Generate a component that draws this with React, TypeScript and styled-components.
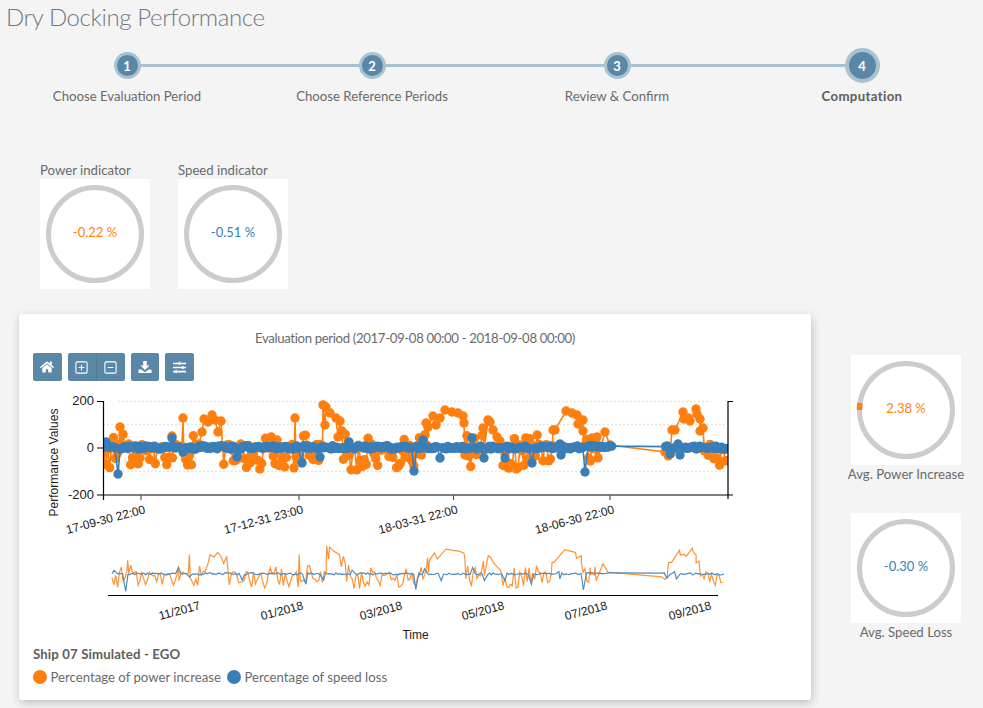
import React from "react";
import styled, { createGlobalStyle } from "styled-components";
import { FaHome, FaSlidersH } from "react-icons/fa";
import { SquarePlus, SquareMinus } from "lucide-react";

const ORANGE = "#ff7f0e";
const BLUE = "#3a7eb8";
const UI_FONT = `"Lato", "Noto Sans", sans-serif`;

const Global = createGlobalStyle`
  html, body { margin: 0; padding: 0; background: #f4f4f4; }
  body { font-family: ${UI_FONT}; color: #666; overflow: hidden; }
`;

const Page = styled.div`
  width: 983px;
  height: 708px;
  overflow: hidden;
  background: #f4f4f4;
`;

const Title = styled.h1`
  margin: 0;
  padding: 0 0 0 6px;
  height: 48px;
  font-size: 24px;
  line-height: 33px;
  font-weight: 300;
  letter-spacing: -0.38px;
  color: #6f7886;
`;

const Stepper = styled.div`
  display: grid;
  grid-template-columns: repeat(4, 245px);
  padding-left: 4.5px;
`;

const Step = styled.div`
  position: relative;
  display: flex;
  flex-direction: column;
  align-items: center;
`;

const Connector = styled.div`
  position: absolute;
  left: 50%;
  top: 16px;
  width: 100%;
  height: 3px;
  background: #a9c2d1;
`;

const DotSlot = styled.div`
  height: 35px;
  display: flex;
  align-items: center;
  justify-content: center;
  position: relative;
  z-index: 1;
`;

const Dot = styled.div<{ $active?: boolean }>`
  box-sizing: border-box;
  width: ${(p) => (p.$active ? 35 : 27)}px;
  height: ${(p) => (p.$active ? 35 : 27)}px;
  border-radius: 50%;
  border: ${(p) => (p.$active ? 4 : 3.5)}px solid #a9c2d1;
  background: #5b87a6;
  color: #fff;
  font-size: 13px;
  font-weight: 700;
  display: flex;
  align-items: center;
  justify-content: center;
`;

const StepLabel = styled.div<{ $active?: boolean }>`
  margin-top: 4px;
  font-size: 13.2px;
  line-height: 18px;
  white-space: nowrap;
  letter-spacing: ${(p) => (p.$active ? "0.35px" : "0")};
  font-weight: ${(p) => (p.$active ? 700 : 400)};
  color: ${(p) => (p.$active ? "#5d5d5d" : "#6a6a6a")};
`;

const Indicators = styled.div`
  display: flex;
  gap: 28px;
  margin: 56px 0 0 40px;
`;

const Indicator = styled.div`
  width: 110px;
`;

const IndicatorLabel = styled.div`
  font-size: 13.2px;
  line-height: 18px;
  color: #6a6a6a;
  white-space: nowrap;
`;

const GaugeSvg = styled.svg`
  display: block;
  width: 110px;
  height: 110px;
  background: #fff;
`;

const GaugeValue = styled.text<{ $color: string }>`
  font-family: ${UI_FONT};
  font-size: 13px;
  fill: ${(p) => p.$color};
  text-anchor: middle;
`;

const Main = styled.div`
  display: flex;
  align-items: flex-start;
  margin: 25px 0 0 19px;
`;

const Card = styled.div`
  box-sizing: border-box;
  width: 792px;
  height: 386px;
  flex: none;
  background: #fff;
  border-radius: 3px;
  box-shadow: 1px 3px 10px rgba(0, 0, 0, 0.22);
  padding-top: 15px;
`;

const CardTitle = styled.div`
  text-align: center;
  font-size: 13.2px;
  line-height: 18px;
  letter-spacing: -0.35px;
  color: #6a6a6a;
`;

const Toolbar = styled.div`
  display: flex;
  gap: 6px;
  margin: 6px 0 0 14px;
`;

const ToolGroup = styled.div`
  display: flex;
`;

const ToolButton = styled.button<{ $joinLeft?: boolean; $joinRight?: boolean }>`
  box-sizing: border-box;
  width: 28.5px;
  height: 28px;
  padding: 0;
  border: none;
  color: #fff;
  background: #5b87a6;
  border-radius: ${(p) =>
    p.$joinLeft ? "0 2px 2px 0" : p.$joinRight ? "2px 0 0 2px" : "2px"};
  border-left: ${(p) => (p.$joinLeft ? "1px solid #517c99" : "none")};
  display: flex;
  align-items: center;
  justify-content: center;
`;

const ChartSvg = styled.svg`
  display: block;
  margin-top: 4px;
  width: 792px;
  height: 258px;
`;

const AxisText = styled.text`
  font-family: "Liberation Sans", Arial, sans-serif;
  font-size: 12px;
  fill: #1a1a1a;
`;

const YTick = styled(AxisText)`
  font-size: 13px;
`;

const ShipName = styled.div`
  margin: 2px 0 0 14px;
  font-size: 13.2px;
  line-height: 18px;
  font-weight: 700;
  letter-spacing: 0.13px;
  color: #5d5d5d;
`;

const Legend = styled.div`
  display: flex;
  align-items: center;
  margin: 5px 0 0 14px;
  height: 18px;
`;

const LegendDot = styled.span<{ $color: string }>`
  width: 14px;
  height: 14px;
  border-radius: 50%;
  background: ${(p) => p.$color};
  margin-right: 3.5px;
  flex: none;
`;

const LegendLabel = styled.span`
  font-size: 13.2px;
  line-height: 18px;
  color: #6a6a6a;
  white-space: nowrap;
  margin-right: 6px;
`;

const Side = styled.div`
  margin: 41px 0 0 40px;
  width: 110px;
  display: flex;
  flex-direction: column;
  gap: 30px;
`;

const SideItem = styled.div`
  display: flex;
  flex-direction: column;
  align-items: center;
`;

/* ---------- data ---------- */

function rng(seed: number) {
  return () => {
    seed |= 0;
    seed = (seed + 0x6d2b79f5) | 0;
    let t = Math.imul(seed ^ (seed >>> 15), 1 | seed);
    t = (t + Math.imul(t ^ (t >>> 7), 61 | t)) ^ t;
    return ((t ^ (t >>> 14)) >>> 0) / 4294967296;
  };
}

type P = [number, number];

const orangeKeys: P[] = [
  [120, 427], [183, 418], [172, 436], [202, 432], [204, 419], [208, 422], [212, 415], [215, 420], [218, 432], [221, 421],
  [295, 418], [323, 405], [326, 407], [330, 413], [336, 418], [340, 421], [342, 431], [325, 425], [338, 437],
  [426, 423], [428, 427], [433, 416], [436, 425], [440, 418], [445, 410], [452, 412], [458, 413], [463, 416], [464, 423],
  [483, 428], [488, 420], [490, 422], [493, 430], [497, 437], [500, 441],
  [553, 430], [555, 430], [566, 411], [572, 413], [577, 415], [578, 424], [583, 420], [583, 431],
  [592, 438], [597, 437], [605, 432], [610, 445], [665, 452],
  [672, 430], [675, 430], [683, 412], [684, 419], [688, 418], [690, 421], [696, 409], [697, 414], [700, 419], [700, 431], [703, 428],
];

const blueKeys: P[] = [
  [106, 442], [118, 474], [172, 438], [183, 452], [237, 457], [302, 463], [320, 457], [349, 442],
  [414, 471], [423, 440], [440, 458], [472, 438], [484, 458], [505, 458], [532, 463], [560, 444],
  [561, 455], [585, 472], [597, 447], [670, 454], [678, 444], [680, 455],
];

const orangeSkip: P[] = [
  [200, 222], [323, 343], [428, 464], [484, 500], [553, 584], [598, 668], [672, 703],
];

function buildOrange(): P[] {
  const r = rng(77);
  const pts: P[] = [];
  for (let x = 104; x < 729; x += 1.9) {
    if (orangeSkip.some(([a, b]) => x > a && x < b)) continue;
    const k = r();
    let y: number;
    if (k < 0.42) y = 444 + r() * 7;
    else if (k < 0.64) y = 453 + r() * 8;
    else if (k < 0.9) y = 459 + r() * 11;
    else y = 434 + r() * 6;
    pts.push([x, y]);
  }
  return [...pts, ...orangeKeys].sort((a, b) => a[0] - b[0]);
}

function buildBlue(): P[] {
  const r = rng(21);
  const pts: P[] = [];
  for (let x = 104; x < 729; x += 1.8) {
    if (x > 612 && x < 664) continue;
    if (blueKeys.some(([a]) => Math.abs(a - x) < 1.8)) continue;
    pts.push([x, 447.5 + (r() - 0.5) * 3.5]);
  }
  return [...pts, ...blueKeys].sort((a, b) => a[0] - b[0]);
}

const orange = buildOrange();
const blue = buildBlue();

const line = (pts: P[]) => pts.map(([x, y]) => `${x.toFixed(1)},${y.toFixed(1)}`).join(" ");
const toOverview = (pts: P[]): P[] =>
  pts.map(([x, y]) => [112 + (x - 104) * 0.98, 573.5 - (447 - y) * 0.66]);

const mainTicks = [
  { x: 141, label: "17-09-30 22:00" },
  { x: 299, label: "17-12-31 23:00" },
  { x: 453.5, label: "18-03-31 22:00" },
  { x: 610, label: "18-06-30 22:00" },
];

const overviewTicks = [
  { x: 201, label: "11/2017" },
  { x: 304, label: "01/2018" },
  { x: 403, label: "03/2018" },
  { x: 505, label: "05/2018" },
  { x: 608, label: "07/2018" },
  { x: 712, label: "09/2018" },
];

const steps = ["Choose Evaluation Period", "Choose Reference Periods", "Review & Confirm", "Computation"];

/* ---------- parts ---------- */

const Gauge = ({ value, color, mark }: { value: string; color: string; mark?: boolean }) => (
  <GaugeSvg viewBox="0 0 110 110">
    <circle cx="55" cy="55" r="46.5" fill="none" stroke="#cccccc" strokeWidth="5" />
    {mark && <path d="M8.5 55 A46.5 46.5 0 0 1 9 48" fill="none" stroke={ORANGE} strokeWidth="5.5" />}
    <GaugeValue x="55" y="58" $color={color}>{value}</GaugeValue>
  </GaugeSvg>
);

const SaveIcon = () => (
  <svg width="14" height="14" viewBox="0 0 14 14" fill="#fff">
    <path d="M5.2 1h3.6v4.5h2.7L7 10 2.500 5.500h2.700z" />
    <path d="M.5 9.500h2.800L7 12.200l3.700-2.700h2.800V13H.5z" />
  </svg>
);

const Chart = () => (
  <ChartSvg viewBox="19 385 792 258">
    <defs>
      <clipPath id="plot"><rect x="103" y="395" width="625" height="100" /></clipPath>
    </defs>
    <g stroke="#e4e4e4" strokeWidth="1.5" strokeDasharray="2 2">
      <line x1="118" x2="711" y1="401.5" y2="401.5" />
      <line x1="103" x2="727" y1="424.5" y2="424.5" />
      <line x1="103" x2="727" y1="471.5" y2="471.5" />
    </g>
    <g clipPath="url(#plot)">
      <polyline points={line(orange)} fill="none" stroke={ORANGE} strokeWidth="1.6" />
      {orange.map(([x, y], i) => <circle key={i} cx={x} cy={y} r="4.7" fill={ORANGE} />)}
      <polyline points={line(blue)} fill="none" stroke={BLUE} strokeWidth="1.6" />
      {blue.map(([x, y], i) => <circle key={i} cx={x} cy={y} r="4.7" fill={BLUE} />)}
    </g>
    <g stroke="#000" strokeWidth="1.2" fill="none">
      <path d="M97 401.500H103.500V495M97 448H103.500M97 495H733" />
      <path d="M733 401.500H728V499" />
      <path d="M103.500 495V500" />
    </g>
    {mainTicks.map((t) => (
      <line key={t.x} x1={t.x} x2={t.x} y1="495" y2="500" stroke="#555" strokeWidth="1.2" />
    ))}
    <YTick x="94" y="405" textAnchor="end">200</YTick>
    <YTick x="94" y="452" textAnchor="end">0</YTick>
    <YTick x="94" y="499" textAnchor="end">-200</YTick>
    <AxisText transform="translate(58 462.5) rotate(-90)" textAnchor="middle">Performance Values</AxisText>
    {mainTicks.map((t) => (
      <AxisText key={t.x} transform={`translate(${t.x + 5} 513) rotate(-15)`} textAnchor="end">{t.label}</AxisText>
    ))}
    <polyline points={line(toOverview(orange))} fill="none" stroke="#ff9233" strokeWidth="1.2" />
    <polyline points={line(toOverview(blue))} fill="none" stroke="#4f8cc0" strokeWidth="1.2" />
    <line x1="108" x2="718" y1="595.5" y2="595.5" stroke="#000" strokeWidth="1.2" />
    {overviewTicks.map((t) => (
      <AxisText key={t.x} transform={`translate(${t.x} 609) rotate(-15)`} textAnchor="end">{t.label}</AxisText>
    ))}
    <AxisText x="415.5" y="639" textAnchor="middle">Time</AxisText>
  </ChartSvg>
);

export default function App() {
  return (
    <Page>
      <Global />
      <Title>Dry Docking Performance</Title>
      <Stepper>
        {steps.map((s, i) => (
          <Step key={s}>
            {i < 3 && <Connector />}
            <DotSlot><Dot $active={i === 3}>{i + 1}</Dot></DotSlot>
            <StepLabel $active={i === 3}>{s}</StepLabel>
          </Step>
        ))}
      </Stepper>
      <Indicators>
        <Indicator>
          <IndicatorLabel>Power indicator</IndicatorLabel>
          <Gauge value="-0.22 %" color={ORANGE} />
        </Indicator>
        <Indicator>
          <IndicatorLabel>Speed indicator</IndicatorLabel>
          <Gauge value="-0.51 %" color={BLUE} />
        </Indicator>
      </Indicators>
      <Main>
        <Card>
          <CardTitle>Evaluation period (2017-09-08 00:00 - 2018-09-08 00:00)</CardTitle>
          <Toolbar>
            <ToolButton><FaHome size={14} /></ToolButton>
            <ToolGroup>
              <ToolButton $joinRight><SquarePlus size={15} strokeWidth={1.7} /></ToolButton>
              <ToolButton $joinLeft><SquareMinus size={15} strokeWidth={1.7} /></ToolButton>
            </ToolGroup>
            <ToolButton><SaveIcon /></ToolButton>
            <ToolButton><FaSlidersH size={13} /></ToolButton>
          </Toolbar>
          <Chart />
          <ShipName>Ship 07 Simulated - EGO</ShipName>
          <Legend>
            <LegendDot $color={ORANGE} />
            <LegendLabel>Percentage of power increase</LegendLabel>
            <LegendDot $color={BLUE} />
            <LegendLabel>Percentage of speed loss</LegendLabel>
          </Legend>
        </Card>
        <Side>
          <SideItem>
            <Gauge value="2.38 %" color={ORANGE} mark />
            <IndicatorLabel>Avg. Power Increase</IndicatorLabel>
          </SideItem>
          <SideItem>
            <Gauge value="-0.30 %" color={BLUE} />
            <IndicatorLabel>Avg. Speed Loss</IndicatorLabel>
          </SideItem>
        </Side>
      </Main>
    </Page>
  );
}
